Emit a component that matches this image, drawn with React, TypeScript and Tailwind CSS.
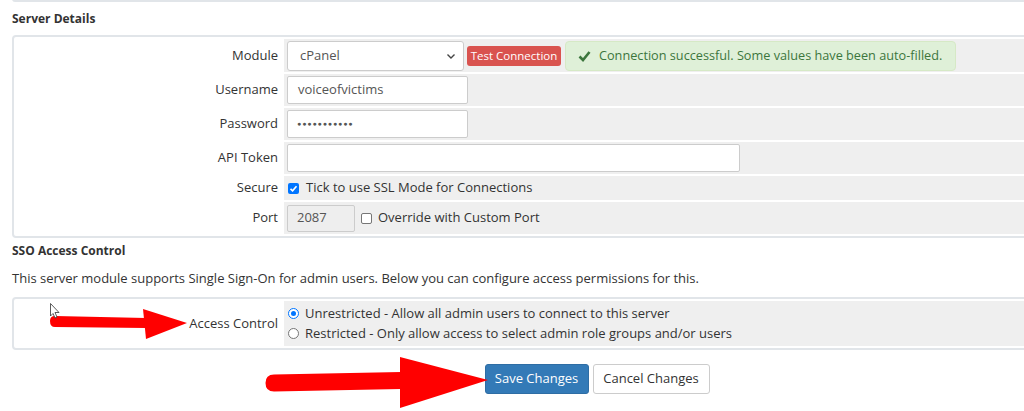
import React from "react";

const font = { fontFamily: "'Open Sans', 'Liberation Sans', sans-serif" };

function Row({ label, h, children }: { label: string; h: string; children?: React.ReactNode }) {
  return (
    <div className={`flex gap-[2px] ${h}`}>
      <div className="w-[266px] shrink-0 flex items-center justify-end pr-[4px] text-[#333]">{label}</div>
      <div className="flex-1 bg-[#efefef] flex items-center pl-[3px]">{children}</div>
    </div>
  );
}

function Annotations() {
  // red arrows + cursor drawn over the screenshot
  return (
    <svg className="absolute inset-0 pointer-events-none" width="1024" height="411" viewBox="0 0 1024 411">
      <path d="M50 321 Q50 316 55 316 L146 318 L146 328 L55 327 Q50 327 50 321 Z" fill="#ff0000" />
      <polygon points="143,309 187,323 146,339" fill="#ff0000" />
      <path d="M50.5 303.5 L50.5 316 L53 313.5 L55 318 L57 317 L55 312.5 L59 312.5 Z" fill="#fff" stroke="#333" strokeWidth="0.8" />
      <path d="M274 374.5 L401 372 L401 389 L274 391.5 Q265.5 391.5 265.5 383 Q265.5 374.5 274 374.5 Z" fill="#ff0000" />
      <polygon points="400,357 488,380 400,408" fill="#ff0000" />
    </svg>
  );
}

export default function App() {
  return (
    <div className="relative w-[1024px] h-[411px] overflow-hidden bg-white text-[13px]" style={font}>
      <div className="w-[1170px] ml-[12px]">
        <div className="h-[3px] border-x-2 border-b-2 border-[#e1e5e9] rounded-b-[4px] -mt-[1px]" />
        <div className="font-bold text-[12px] text-[#333] h-[33px] flex items-center">Server Details</div>

        <div className="border-2 border-[#e1e5e9] rounded-[4px] p-[2px] flex flex-col gap-[2px]">
          <Row label="Module" h="h-[33px]">
            <div className="w-[177px] h-[30px] bg-white border border-[#ccc] rounded-[3px] flex items-center justify-between pl-[12px] pr-[7px] text-[#555]">
              <span>cPanel</span>
              <svg width="10" height="10" viewBox="0 0 10 10"><path d="M1.5 3.5 L5 7 L8.5 3.5" fill="none" stroke="#444" strokeWidth="1.4" /></svg>
            </div>
            <button className="ml-[3px] w-[94px] h-[20px] bg-[#d9534f] text-white text-[11.5px] rounded-[3px] leading-none whitespace-nowrap">Test Connection</button>
            <div className="ml-[4px] w-[391px] h-[30px] bg-[#dff0d8] border border-[#d6e9c6] rounded-[4px] flex items-center pl-[12px] text-[#3c763d] text-[12.7px] whitespace-nowrap">
              <svg width="13" height="12" viewBox="0 0 13 12" className="mr-[8px] shrink-0"><path d="M1.5 6.5 L5 10 L11.5 2" fill="none" stroke="#3c763d" strokeWidth="2.6" /></svg>
              Connection successful. Some values have been auto-filled.
            </div>
          </Row>
          <Row label="Username" h="h-[32px]">
            <div className="w-[181px] h-[28px] bg-white border border-[#ccc] rounded-[2px] flex items-center pl-[10px] text-[#555]">voiceofvictims</div>
          </Row>
          <Row label="Password" h="h-[32px]">
            <div className="w-[181px] h-[28px] bg-white border border-[#ccc] rounded-[2px] flex items-center pl-[9px] text-[#555] text-[7px] tracking-[0.9px]">●●●●●●●●●●●</div>
          </Row>
          <Row label="API Token" h="h-[32px]">
            <div className="w-[453px] h-[28px] bg-white border border-[#ccc] rounded-[2px]" />
          </Row>
          <Row label="Secure" h="h-[24px]">
            <span className="ml-[1px] w-[11px] h-[11px] rounded-[2px] bg-[#0075ff] flex items-center justify-center">
              <svg width="9" height="9" viewBox="0 0 9 9"><path d="M1.5 4.8 L3.6 6.8 L7.5 2.2" fill="none" stroke="#fff" strokeWidth="1.6" /></svg>
            </span>
            <span className="ml-[7px] text-[#333]">Tick to use SSL Mode for Connections</span>
          </Row>
          <Row label="Port" h="h-[32px]">
            <div className="w-[68px] h-[27px] bg-[#eee] border border-[#ccc] rounded-[2px] flex items-center pl-[9px] text-[#555]">2087</div>
            <span className="ml-[6px] w-[11px] h-[11px] rounded-[2px] border border-[#767676] bg-white" />
            <span className="ml-[6px] text-[#333]">Override with Custom Port</span>
          </Row>
        </div>

        <div className="font-bold text-[12px] text-[#333] h-[26px] flex items-center">SSO Access Control</div>
        <div className="text-[#333] h-[30px] flex items-center">
          This server module supports Single Sign-On for admin users. Below you can configure access permissions for this.
        </div>

        <div className="mt-[3px] border-2 border-[#e1e5e9] rounded-[4px] p-[2px]">
          <Row label="Access Control" h="h-[45px]">
            <div className="flex flex-col gap-[1px] text-[#333]">
              <div className="flex items-center h-[19px]">
                <span className="ml-[1px] w-[11px] h-[11px] rounded-full border-[1.5px] border-[#0075ff] bg-white flex items-center justify-center">
                  <span className="w-[5px] h-[5px] rounded-full bg-[#0075ff]" />
                </span>
                <span className="ml-[6px]">Unrestricted - Allow all admin users to connect to this server</span>
              </div>
              <div className="flex items-center h-[19px]">
                <span className="ml-[1px] w-[11px] h-[11px] rounded-full border border-[#767676] bg-white" />
                <span className="ml-[6px]">Restricted - Only allow access to select admin role groups and/or users</span>
              </div>
            </div>
          </Row>
        </div>

        <div className="flex justify-center gap-[4px] mt-[14px]">
          <button className="w-[104px] h-[30px] bg-[#337ab7] border border-[#2e6da4] rounded-[3px] text-white">Save Changes</button>
          <button className="w-[117px] h-[30px] bg-white border border-[#ccc] rounded-[3px] text-[#333]">Cancel Changes</button>
        </div>
      </div>
      <Annotations />
    </div>
  );
}
